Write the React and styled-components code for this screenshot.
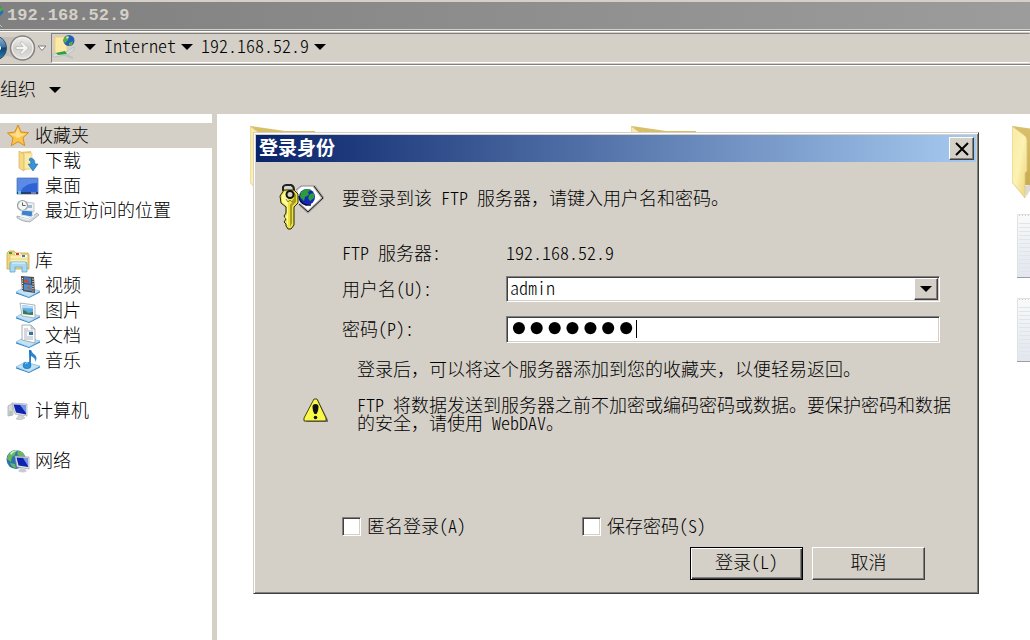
import React, { useState } from "react";
import styled, { createGlobalStyle, css } from "styled-components";

const GlobalStyle = createGlobalStyle`
  * {
    box-sizing: border-box;
  }

  body {
    margin: 0;
    background: #d4d0c8;
    color: #000;
    font-family: "Noto Sans CJK SC", sans-serif;
    font-size: 18px;
    font-weight: 300;
    line-height: 18px;
    overflow: hidden;
  }

  button, input, select {
    font: inherit;
    color: inherit;
    margin: 0;
  }

  svg {
    display: block;
    flex: none;
  }
`;

const Arrow = () => (
  <svg width="12" height="6" viewBox="0 0 12 6" aria-hidden="true">
    <path d="M0 0h12L6 6z" fill="#000" />
  </svg>
);

const TitleGlobe = () => (
  <svg width="4" height="24" viewBox="0 0 4 24" aria-hidden="true">
    <path d="M0 2q4 2 3 7l-3 3z" fill="#1f6fc0" />
    <path d="M0 3q3 0 3 3l-3 2z" fill="#57a83a" />
    <path d="M0 21l2 2" stroke="#b8c4c8" />
  </svg>
);

const NavButtons = () => (
  <svg width="48" height="30" viewBox="0 0 48 30" aria-hidden="true">
    <defs>
      <linearGradient id="navBack" x1="0" y1="0" x2="0" y2="1">
        <stop offset="0" stopColor="#9dbcd6" />
        <stop offset="0.45" stopColor="#3d78a8" />
        <stop offset="0.5" stopColor="#0d4378" />
        <stop offset="1" stopColor="#2c86bd" />
      </linearGradient>
      <linearGradient id="navForward" x1="0" y1="0" x2="0" y2="1">
        <stop offset="0" stopColor="#f1f0ee" />
        <stop offset="0.5" stopColor="#d0cfcb" />
        <stop offset="1" stopColor="#e2e0dc" />
      </linearGradient>
    </defs>
    <path d="M0 4h22v22H14Q8 20 0 26z" fill="#c2bfb9" />
    <circle cx="-6" cy="15" r="12.5" fill="url(#navBack)" stroke="#3c4a58" />
    <path d="M-4 15h5" stroke="#fff" strokeWidth="3" />
    <circle cx="22.5" cy="15" r="12" fill="url(#navForward)" stroke="#85837f" strokeWidth="1.5" />
    <circle cx="22.5" cy="15" r="10.5" fill="none" stroke="#f5f4f2" />
    <path d="M16 13.5h7l-3-3.500 2-1.500 6.500 6.500-6.500 6.500-2-1.500 3-3.500h-7z" fill="#f6f5f4" stroke="#b9b7b3" strokeWidth="0.8" />
    <path d="M38 13h8l-4 4.500z" fill="#fff" stroke="#7c7c7c" />
  </svg>
);

const FtpPlaceIcon = () => (
  <svg width="24" height="26" viewBox="0 0 24 26" aria-hidden="true">
    <path d="M2 4l10-2v17L3 20z" fill="#f7dc84" />
    <path d="M3 3h12v16H3z" fill="#fbe9a7" stroke="#e8c866" strokeWidth="0.6" />
    <circle cx="17" cy="6.500" r="5.5" fill="#2461b5" />
    <path d="M12 4q3-3 5-2l-1 4-3 3-2-2zM17 9l4-2-1 4-3 1z" fill="#58ad45" />
    <path d="M14 3q2-1 3 0l-2 2z" fill="#cde9ff" />
    <path d="M1 20l13-2 8-5v3l-7 5-14 2z" fill="#d8dcdd" stroke="#a6acae" strokeWidth="0.5" />
    <path d="M4 19l9-2 2 3-9 1z" fill="#24a443" />
    <path d="M13 21l8 3" stroke="#bcc2c5" strokeWidth="2" />
  </svg>
);

const StarIcon = () => (
  <svg width="24" height="24" viewBox="0 0 24 24" aria-hidden="true">
    <path
      d="M12 1l3 7 7.500.7-5.500 5 1.700 8-6.700-4-6.700 4L7 14 1.500 9l7.300-1z"
      fill="#fcc44c"
      stroke="#d88b1e"
      strokeLinejoin="round"
    />
    <path d="M12 4l2.300 5.500 5.700.6-8 3.900-8-3.700 5.500-.8z" fill="#ffe08a" />
  </svg>
);

const DownloadsIcon = () => (
  <svg width="24" height="24" viewBox="0 0 24 24" aria-hidden="true">
    <path d="M4 3l11-1v18l-8 1z" fill="#e9c869" />
    <path d="M7 4h9v16H7z" fill="#fbeaa8" stroke="#dfc068" strokeWidth="0.5" />
    <path d="M3 2l5 3v17l-5-3z" fill="#f5d983" stroke="#d4b15a" strokeWidth="0.7" />
    <path d="M14 9q5 0 5 6h3l-5 7-5-7h3q0-3-2-4z" fill="#3693d6" stroke="#1f6cad" strokeWidth="0.6" />
  </svg>
);

const DesktopIcon = () => (
  <svg width="24" height="24" viewBox="0 0 24 24" aria-hidden="true">
    <path d="M1 4h21v16H1z" fill="#2f62d3" stroke="#7f9ac8" />
    <path d="M2 5h19v4Q9 9 5 17H2z" fill="#6e9bef" opacity="0.7" />
    <path d="M1 18h21v2H1z" fill="#2a3f66" />
    <path d="M2 17h3v3H2z" fill="#62c3e8" />
    <path d="M15 19h5" stroke="#b9c9e4" />
  </svg>
);

const RecentIcon = () => (
  <svg width="24" height="24" viewBox="0 0 24 24" aria-hidden="true">
    <path d="M9 3l9 1v9l-9 1z" fill="#edf1f4" stroke="#a9b3ba" strokeWidth="0.7" />
    <path d="M12 6h4v3h-4z" fill="#9cb9d4" />
    <circle cx="6.500" cy="6.500" r="5" fill="#f4f4f2" stroke="#9a9fa3" strokeWidth="1.2" />
    <path d="M6.500 3.500v3h3" fill="none" stroke="#596169" />
    <path d="M6 11l11 1-1 6-11-2z" fill="#3e83cd" stroke="#dfe5e9" />
    <path d="M1 17l11 3 9-6 2 2-9 7q-7 0-13-4z" fill="#d5dade" stroke="#939da4" strokeWidth="0.7" />
    <path d="M4 18.500l8 2 6-4" stroke="#fff" fill="none" />
  </svg>
);

const LibraryIcon = () => (
  <svg width="24" height="24" viewBox="0 0 24 24" aria-hidden="true">
    <path d="M1 20V4l2-2h5l2 2h12l1 2v14z" fill="#f2d67c" stroke="#c9a544" strokeWidth="0.8" />
    <path d="M4 6h18v13H4z" fill="#fbeeb0" stroke="#d8b759" strokeWidth="0.6" />
    <path d="M9 4h5l1 2h-6zM15 6h6v2h-6z" fill="#fff" />
    <path d="M3 3h3v2H3z" fill="#36a042" />
    <path d="M10 4h3v2h-3z" fill="#d73b28" />
    <path d="M16 6h3v2h-3z" fill="#2d81cc" />
    <path d="M2 10h21" stroke="#e2c771" strokeWidth="0.6" />
    <path d="M4 23v-8q0-2 2-2h13q2 0 2 2v8h-5v-5H9v5z" fill="#a9d9f0" stroke="#5fa7cf" strokeWidth="0.8" />
    <path d="M6 14h13" stroke="#e9f8ff" />
  </svg>
);

const LibraryBase = () => (
  <>
    <path d="M0 18l13 5 11-6v1.500L13 24 0 19.500z" fill="#2f83c4" />
    <path d="M0 18l9-5 15 4-11 6z" fill="#c3e3f5" stroke="#6bb0dc" strokeWidth="0.6" />
  </>
);

const VideoIcon = () => (
  <svg width="24" height="24" viewBox="0 0 24 24" aria-hidden="true">
    <LibraryBase />
    <path d="M5 2l13 1 1 16-13-2z" fill="#4b4a4a" />
    <path d="M8 3l7 1v6l-7-1z" fill="#3e83cd" />
    <path d="M8 6l3-1 3 4-6-1z" fill="#c65030" />
    <path d="M8 10l8 1v6l-8-1z" fill="#4d91d5" />
    <path d="M6.500 4v13M17 4.500v13" stroke="#e8e8e8" strokeWidth="1.2" strokeDasharray="1.2 1.2" />
    <path d="M10 14l3-2 3 4z" fill="#b5633c" />
  </svg>
);

const PictureIcon = () => (
  <svg width="24" height="24" viewBox="0 0 24 24" aria-hidden="true">
    <LibraryBase />
    <path d="M4 4l15 2v13L6 17z" fill="#f8f9fa" stroke="#9aa4ac" strokeWidth="0.8" />
    <path d="M6 6l11 1.500V16L7 15z" fill="#5fa9e4" />
    <path d="M6 6l11 1.500v2L6 9z" fill="#b4dcf6" />
    <path d="M7 11q4 1 5 3l5-1v3L7 15z" fill="#397b4b" />
  </svg>
);

const DocumentIcon = () => (
  <svg width="24" height="24" viewBox="0 0 24 24" aria-hidden="true">
    <LibraryBase />
    <path d="M6 1h9l4 4v14L6 16z" fill="#fafbfc" stroke="#949da5" strokeWidth="0.8" />
    <path d="M15 1v4h4z" fill="#cbd4db" stroke="#949da5" strokeWidth="0.5" />
    <path d="M8 5h4M8 7h9M8 9h3M8 11h3M8 13h9M8 15h9" stroke="#9ca5ae" strokeWidth="0.8" />
    <path d="M13 8h4v3h-4z" fill="#35739e" />
  </svg>
);

const MusicIcon = () => (
  <svg width="24" height="24" viewBox="0 0 24 24" aria-hidden="true">
    <LibraryBase />
    <path d="M13 1h2q1 3 4 5 3 3 0 7 1-4-4-6v9z" fill="#2787d2" />
    <path d="M14 1v15" stroke="#1b6fb8" strokeWidth="1.5" />
    <ellipse cx="11" cy="16.5" rx="4" ry="3.2" fill="#2c91db" stroke="#1b6cb2" strokeWidth="0.6" />
    <path d="M9 15q1-2 3-1" stroke="#a6dcfa" fill="none" />
  </svg>
);

const ComputerIcon = () => (
  <svg width="24" height="24" viewBox="0 0 24 24" aria-hidden="true">
    <path d="M2 7l5-3v12l-5 1z" fill="#d6d9db" stroke="#a1a5a8" strokeWidth="0.7" />
    <path d="M3 13h3M3 15h3" stroke="#6aaf70" strokeWidth="0.7" />
    <path d="M6 4l15 1v12L9 15z" fill="#e4e6e8" stroke="#a5aaae" strokeWidth="0.7" />
    <path d="M7.500 5.500L20 6v9.500L10 13.500z" fill="#0e24ae" />
    <path d="M14 6l6 0v8z" fill="#7596ee" />
    <path d="M13 16l4 1 2 2q-4 3-9 1l1-1z" fill="#cfd3d6" stroke="#a9aeb2" strokeWidth="0.5" />
  </svg>
);

const NetworkIcon = () => (
  <svg width="24" height="24" viewBox="0 0 24 24" aria-hidden="true">
    <circle cx="10" cy="10.5" r="9.5" fill="#2a73ad" />
    <path d="M2 6q4-5 8-5l-1 5-3 2-1 5-4-3zM12 2q5 0 7 5l-5 1-3-3zM4 14l5 1 1 4q-4 0-6-5z" fill="#69b65c" />
    <path d="M4 4q4-4 9-2-5 0-8 4z" fill="#c5ecd3" />
    <path d="M9 7l14 1v12l-12-2z" fill="#e2e4e6" stroke="#989ea3" strokeWidth="0.7" />
    <path d="M10.500 8.500L22 9v9l-9.500-1.500z" fill="#0d22ae" />
    <path d="M17 9h5v8z" fill="#7394eb" />
    <path d="M15 19l4 1 2 2q-4 3-9 0l1-1z" fill="#c9cdd0" />
  </svg>
);

const KeyIcon = () => (
  <svg width="45" height="46" viewBox="0 0 45 46" aria-hidden="true">
    <path d="M19 6l5-4h11l3 4 6 8-6 5-9 9-11-10z" fill="#fff" />
    <path d="M17 6l5-4h13" fill="none" stroke="#8a8a8a" />
    <path d="M35 2l9 12-15 14-9-8" fill="none" stroke="#b0aea8" strokeWidth="3" />
    <path d="M35 2l9 12-15 14-9-8" fill="none" stroke="#1c1c1c" />
    <circle cx="28" cy="13" r="8" fill="#1428b8" />
    <path d="M22 8q5-5 10-2l-3 2 1 3-4 2-1 4-4-4zM31 10l4-1v5l-4 3-2-3z" fill="#2c9b39" />
    <path d="M20 12q0 7 7 9h5" stroke="#050d40" strokeWidth="1.5" fill="none" />
    <path d="M4 7V3q1-2 3-2h5q3 1 3 5" fill="none" stroke="#222" strokeWidth="2" />
    <path d="M6 6V4l2-1h4l1 3" fill="none" stroke="#dadada" />
    <path
      d="M5 6h10l4 4v9l-4 4v18l-3 4H9l-2-3v-2l-2-2 2-3-2-3 2-3v-6l-5-4-1-7z"
      fill="#ece244"
      stroke="#282500"
    />
    <path d="M3 11l3-3h3v33h-1v-6l-2-1 2-3v-9l-5-4z" fill="#fff99a" />
    <path d="M15 8l2 3v7l-4 4v17l-2 4V21l4-5z" fill="#a69c20" />
    <circle cx="11" cy="10.5" r="3.5" fill="#d4d0c8" stroke="#111" strokeWidth="2" />
    <path d="M7 15l2 3 2-2 2 2 2-3" stroke="#888025" fill="none" />
  </svg>
);

const WarningIcon = () => (
  <svg width="26" height="26" viewBox="0 0 26 26" aria-hidden="true">
    <path d="M13 2h2l10 20v2H3z" fill="#6f6f6f" />
    <path d="M11 1h3l9 19v3H1v-3z" fill="#fbf84c" stroke="#45430a" strokeLinejoin="round" />
    <path d="M12.500 6q3 0 3 3 0 4-2 7h-2q-2-3-2-7 0-3 3-3z" fill="#111" />
    <circle cx="12.5" cy="19.5" r="1.8" fill="#111" />
  </svg>
);

const FolderPicture = () => (
  <svg width="76" height="74" viewBox="0 0 76 74" aria-hidden="true">
    <defs>
      <linearGradient id="folderFlap" x1="0" y1="0" x2="1" y2="1">
        <stop offset="0" stopColor="#f9eaa6" />
        <stop offset="0.5" stopColor="#fcf2b2" />
        <stop offset="1" stopColor="#ebd277" />
      </linearGradient>
      <linearGradient id="folderBack" x1="0" y1="0" x2="0" y2="1">
        <stop offset="0" stopColor="#d9c06b" />
        <stop offset="1" stopColor="#c9ac52" />
      </linearGradient>
    </defs>
    <path d="M12 60l10-2-8 13z" fill="#cfcac5" opacity="0.7" />
    <path d="M1 0l34 5h30v54H12z" fill="url(#folderBack)" />
    <path d="M0 0l12 9q3 2 3 5v31l-2 2v25L0 56z" fill="url(#folderFlap)" stroke="#dcc887" strokeWidth="0.8" />
  </svg>
);

const NotePicture = () => (
  <svg width="52" height="64" viewBox="0 0 52 64" aria-hidden="true">
    <defs>
      <linearGradient id="notePaper" x1="0" y1="0" x2="0" y2="1">
        <stop offset="0" stopColor="#fafafa" />
        <stop offset="0.6" stopColor="#e9eef2" />
        <stop offset="1" stopColor="#e4e6ef" />
      </linearGradient>
    </defs>
    <path d="M0.500 0.500h51v63h-51z" fill="url(#notePaper)" stroke="#dfe1e3" />
    <path
      d="M2 9.500h48M2 13.500h48M2 17.500h48M2 21.500h48M2 25.500h48M2 29.500h48M2 33.500h48M2 37.500h48M2 41.500h48M2 45.500h48M2 49.500h48M2 53.500h48M2 57.500h48"
      stroke="#dfe5eb"
    />
    <path d="M2 1.500h48" stroke="#c9c9c9" strokeDasharray="1 2" />
    <path d="M0 63.500h52" stroke="#9a9fa5" />
  </svg>
);

const sidebarGroups = [
  {
    name: "收藏夹",
    icon: StarIcon,
    active: true,
    items: [
      { name: "下载", icon: DownloadsIcon },
      { name: "桌面", icon: DesktopIcon },
      { name: "最近访问的位置", icon: RecentIcon },
    ],
  },
  {
    name: "库",
    icon: LibraryIcon,
    items: [
      { name: "视频", icon: VideoIcon },
      { name: "图片", icon: PictureIcon },
      { name: "文档", icon: DocumentIcon },
      { name: "音乐", icon: MusicIcon },
    ],
  },
  { name: "计算机", icon: ComputerIcon, items: [] },
  { name: "网络", icon: NetworkIcon, items: [] },
];

const LoginDialog = () => {
  const [user, setUser] = useState("admin");
  const [password, setPassword] = useState("1234567");

  return (
    <Dialog role="dialog" aria-labelledby="dialog-title">
      <DialogTitleBar>
        <DialogTitle id="dialog-title">登录身份</DialogTitle>
        <CloseButton type="button" aria-label="关闭">
          <svg width="14" height="14" viewBox="0 0 14 14" aria-hidden="true">
            <path d="M1 1l12 12M13 1L1 13" stroke="#000" strokeWidth="2" />
          </svg>
        </CloseButton>
      </DialogTitleBar>
      <DialogForm onSubmit={(e) => e.preventDefault()}>
        <Intro>
          <KeyIcon />
          <IntroText>
            要登录到该<Latin> FTP </Latin>服务器，请键入用户名和密码。
          </IntroText>
        </Intro>
        <Fields>
          <Label>
            <Latin>FTP </Latin>服务器<Latin>:</Latin>
          </Label>
          <Label>
            <Latin>192.168.52.9</Latin>
          </Label>
          <Label as="label" htmlFor="user">
            用户名<Latin>(U):</Latin>
          </Label>
          <Field>
            <UserSelect id="user" value={user} onChange={(e) => setUser(e.target.value)}>
              <option>admin</option>
            </UserSelect>
            <SelectArrow>
              <Arrow />
            </SelectArrow>
          </Field>
          <Label as="label" htmlFor="password">
            密码<Latin>(P):</Latin>
          </Label>
          <Field>
            <PasswordInput
              id="password"
              type="password"
              value={password}
              onChange={(e) => setPassword(e.target.value)}
            />
            <Caret />
          </Field>
        </Fields>
        <Hint>登录后，可以将这个服务器添加到您的收藏夹，以便轻易返回。</Hint>
        <Warning>
          <WarningMark>
            <WarningIcon />
          </WarningMark>
          <WarningText>
            <Latin>FTP </Latin>将数据发送到服务器之前不加密或编码密码或数据。要保护密码和数据的安全，请使用
            <Latin> WebDAV</Latin>。
          </WarningText>
        </Warning>
        <Options>
          <CheckLabel>
            <CheckBox type="checkbox" />
            <Label>
              匿名登录<Latin>(A)</Latin>
            </Label>
          </CheckLabel>
          <CheckLabel>
            <CheckBox type="checkbox" />
            <Label>
              保存密码<Latin>(S)</Latin>
            </Label>
          </CheckLabel>
        </Options>
        <Actions>
          <ActionButton type="submit" $primary>
            登录<Latin>(L)</Latin>
          </ActionButton>
          <ActionButton type="button">取消</ActionButton>
        </Actions>
      </DialogForm>
    </Dialog>
  );
};

const App = () => {
  return (
    <Window>
      <GlobalStyle />
      <TitleBar>
        <TitleGlobe />
        <WindowTitle>192.168.52.9</WindowTitle>
      </TitleBar>
      <AddressRow>
        <NavButtons />
        <AddressBar aria-label="地址">
          <FtpPlaceIcon />
          <Crumb type="button" aria-label="位置">
            <Arrow />
          </Crumb>
          <Crumb type="button">
            <Label>
              <Latin>Internet</Latin>
            </Label>
            <Arrow />
          </Crumb>
          <Crumb type="button">
            <Label>
              <Latin>192.168.52.9</Latin>
            </Label>
            <Arrow />
          </Crumb>
        </AddressBar>
      </AddressRow>
      <Toolbar>
        <ToolButton type="button">
          <Label>组织</Label>
          <Arrow />
        </ToolButton>
      </Toolbar>
      <Content>
        <Sidebar>
          {sidebarGroups.map(({ name, icon: Icon, active, items }) => (
            <Group key={name}>
              <Item href="#" $active={active}>
                <Icon />
                <Label>{name}</Label>
              </Item>
              {items.map(({ name: child, icon: ChildIcon }) => (
                <Item key={child} href="#" $nested>
                  <ChildIcon />
                  <Label>{child}</Label>
                </Item>
              ))}
            </Group>
          ))}
        </Sidebar>
        <Main>
          <Files>
            <FolderPicture />
            <FolderPicture />
            <FolderPicture />
            <NoteCell>
              <NotePicture />
            </NoteCell>
            <NoteCell>
              <NotePicture />
            </NoteCell>
          </Files>
          <LoginDialog />
        </Main>
      </Content>
    </Window>
  );
};

const raised = css`
  border: 1px solid;
  border-color: #fff #404040 #404040 #fff;
  box-shadow: inset -1px -1px #808080;
`;

const sunken = css`
  border: 1px solid;
  border-color: #808080 #fff #fff #808080;
  box-shadow: inset 1px 1px #404040, inset -1px -1px #d4d0c8;
`;

// half-width latin glyphs, each takes half of a chinese character
const Latin = styled.span`
  font-feature-settings: "hwid";
  white-space: pre;
`;

const Label = styled.span`
  padding-bottom: 4px;
`;

const Window = styled.div`
  display: flex;
  flex-direction: column;
  height: 100vh;
`;

const TitleBar = styled.header`
  display: flex;
  align-items: center;
  gap: 3px;
  height: 27px;
  margin-top: 2px;
  background: linear-gradient(to right, #808080, #9c9c9c);
`;

const WindowTitle = styled.h1`
  margin: 0;
  color: #d4d0c8;
  font-family: "Liberation Mono", monospace;
  font-size: 17px;
  font-weight: 700;
  line-height: 18px;
`;

const AddressRow = styled.div`
  display: flex;
  align-items: center;
  gap: 3px;
  height: 35px;
  border-top: 1px solid #808080;
  border-bottom: 1px solid #808080;
  box-shadow: inset 0 1px #fff, 0 1px #fff;
  margin-top: 1px;
`;

const AddressBar = styled.nav`
  display: flex;
  flex: 1;
  align-items: center;
  align-self: flex-end;
  height: 30px;
  margin-bottom: 1px;
  padding-bottom: 2px;
  border: 1px solid;
  border-color: #808080 transparent #fff #808080;
`;

const Crumb = styled.button`
  display: flex;
  align-items: center;
  gap: 5px;
  padding: 0 0 0 8px;
  border: none;
  background: none;
`;

const Toolbar = styled.div`
  display: flex;
  align-items: center;
  height: 49px;
`;

const ToolButton = styled.button`
  display: flex;
  align-items: center;
  gap: 13px;
  padding: 0;
  border: none;
  background: none;
`;

const Content = styled.div`
  display: flex;
  flex: 1;
  min-height: 0;
`;

const Sidebar = styled.nav`
  display: flex;
  flex-direction: column;
  flex: none;
  gap: 25px;
  width: 217px;
  padding-top: 9px;
  border-right: 5px solid #d4d0c8;
  background: #fff;
`;

const Group = styled.div`
  display: flex;
  flex-direction: column;
`;

const Item = styled.a`
  display: flex;
  align-items: center;
  gap: 5px;
  height: 25px;
  padding-left: ${({ $nested }) => ($nested ? "16px" : "6px")};
  background: ${({ $active }) => ($active ? "#d4d0c8" : "none")};
  color: #000;
  text-decoration: none;
`;

const Main = styled.main`
  position: relative;
  flex: 1;
  min-width: 0;
  background: #fff;
`;

const Files = styled.div`
  display: grid;
  grid-template-columns: repeat(3, 381px);
  grid-auto-rows: 84px;
  height: 100%;
  padding: 12px 0 0 33px;
  overflow: hidden;
`;

const NoteCell = styled.div`
  grid-column: 3;
  padding: 4px 0 0 5px;
`;

const Dialog = styled.section`
  position: absolute;
  top: 18px;
  right: 51px;
  left: 36px;
  padding: 2px;
  border: 1px solid;
  border-color: #d4d0c8 #404040 #404040 #d4d0c8;
  background: #d4d0c8;
  box-shadow: inset 1px 1px #fff, inset -1px -1px #808080;
`;

const DialogTitleBar = styled.header`
  display: flex;
  align-items: center;
  justify-content: space-between;
  height: 27px;
  padding: 0 2px 0 3px;
  background: linear-gradient(to right, #0a246a, #a6caf0);
`;

const DialogTitle = styled.h2`
  margin: 0;
  padding-bottom: 4px;
  color: #fff;
  font-size: 19px;
  font-weight: 700;
  line-height: 18px;
`;

const CloseButton = styled.button`
  display: flex;
  align-items: center;
  justify-content: center;
  width: 25px;
  height: 23px;
  padding: 0;
  background: #d4d0c8;
  ${raised}
`;

const DialogForm = styled.form`
  padding: 22px 20px 11px 23px;
`;

const Intro = styled.div`
  display: flex;
  gap: 18px;
`;

const IntroText = styled.p`
  margin: 4px 0 0;
`;

const Fields = styled.div`
  display: grid;
  grid-template-columns: 164px 1fr;
  grid-template-rows: 18px 27px 27px;
  align-items: center;
  gap: 13px 0;
  margin: 15px 16px 0 63px;
`;

const Field = styled.div`
  position: relative;
  height: 27px;
`;

const UserSelect = styled.select`
  appearance: none;
  display: block;
  width: 100%;
  height: 26px;
  padding: 0 28px 4px 3px;
  border-radius: 0;
  outline: none;
  background: #fff;
  font-feature-settings: "hwid";
  ${sunken}
`;

const SelectArrow = styled.span`
  position: absolute;
  top: 2px;
  right: 2px;
  display: flex;
  align-items: center;
  justify-content: center;
  width: 24px;
  height: 22px;
  background: #d4d0c8;
  pointer-events: none;
  ${raised}
`;

const PasswordInput = styled.input`
  display: block;
  width: 100%;
  height: 27px;
  padding: 0 3px 4px;
  border-radius: 0;
  outline: none;
  background: #fff;
  font-family: "Liberation Serif", serif;
  font-size: 51px;
  ${sunken}
`;

const Caret = styled.span`
  position: absolute;
  top: 4px;
  left: 130px;
  width: 1px;
  height: 18px;
  background: #000;
`;

const Hint = styled.p`
  margin: 16px 0 0 78px;
`;

const Warning = styled.div`
  display: flex;
  gap: 28px;
  margin: 18px 0 0 24px;
`;

const WarningMark = styled.div`
  height: 29px;
  padding-top: 3px;
`;

const WarningText = styled.p`
  flex: 1;
  margin: 0;
`;

const Options = styled.div`
  display: grid;
  grid-template-columns: 240px 240px;
  margin: 85px 0 0 63px;
`;

const CheckLabel = styled.label`
  display: flex;
  align-items: center;
  gap: 6px;
  height: 21px;
`;

const CheckBox = styled.input`
  appearance: none;
  width: 19px;
  height: 19px;
  background: #fff;
  ${sunken}

  &:checked {
    background: #404040;
  }
`;

const Actions = styled.div`
  display: flex;
  justify-content: flex-end;
  gap: 9px;
  margin: 10px 31px 0 0;
`;

const ActionButton = styled.button`
  width: 113px;
  height: 33px;
  padding: 0 0 5px;
  background: #d4d0c8;
  ${raised}
  ${({ $primary }) =>
    $primary &&
    css`
      border-color: #000;
      box-shadow: inset 1px 1px #fff, inset -1px -1px #404040, inset -2px -2px #808080;
    `}
`;

export default App;
